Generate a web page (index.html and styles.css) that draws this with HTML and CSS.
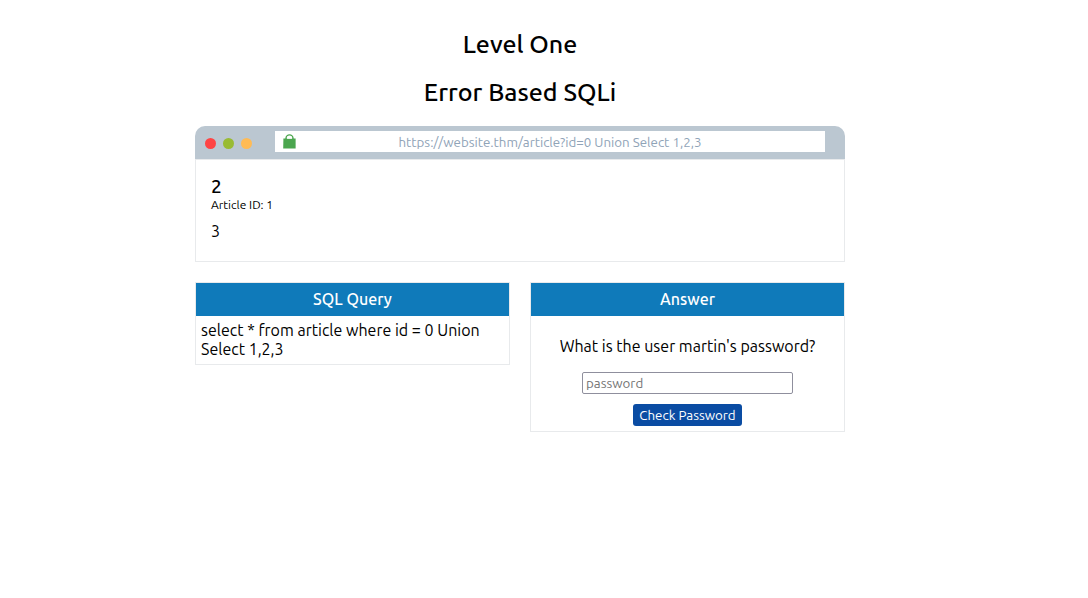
FILE: index.html
```html
<!DOCTYPE html>
<html lang="en">
<head>
    <meta charset="UTF-8">
    <meta name="viewport" content="width=device-width, initial-scale=1.0">
    <title>Level One - Error Based SQLi</title>
    <link rel="stylesheet" href="styles.css">
</head>
<body>
    <main class="container">
        <h1 class="title">Level One</h1>
        <h2 class="title">Error Based SQLi</h2>

        <div class="browser">
            <div class="browser-bar">
                <div class="dots">
                    <span class="dot red"></span>
                    <span class="dot green"></span>
                    <span class="dot orange"></span>
                </div>
                <div class="address">
                    <svg class="lock" viewBox="0 0 13 15" aria-hidden="true">
                        <path d="M3 6V4.4a3.5 3.5 0 0 1 7 0V6" fill="none" stroke="#4ba64f" stroke-width="1.4"/>
                        <path d="M0.4 4.6h12.2V14.4H0.2z" fill="#4ba64f"/>
                        <path d="M4 4.7a2.5 2.7 0 0 1 5 0z" fill="#fff"/>
                    </svg>
                    <input class="url" type="text" aria-label="Address" value="https://website.thm/article?id=0 Union Select 1,2,3">
                </div>
            </div>
            <div class="browser-page">
                <h3 class="article-title">2</h3>
                <div class="article-id">Article ID: 1</div>
                <p class="article-text">3</p>
            </div>
        </div>

        <div class="panels">
            <section class="panel">
                <h3 class="panel-title">SQL Query</h3>
                <div class="panel-body">select * from article where id = 0 Union Select 1,2,3</div>
            </section>
            <section class="panel">
                <h3 class="panel-title">Answer</h3>
                <form class="panel-body answer">
                    <label for="password">What is the user martin's password?</label>
                    <input class="password" id="password" type="text" placeholder="password">
                    <button class="check" type="button">Check Password</button>
                </form>
            </section>
        </div>
    </main>
</body>
</html>
```

FILE: styles.css
```css
* {
    box-sizing: border-box;
}
body {
    margin: 0;
    padding: 29px 48px 30px 0;
    background-color: #fff;
    color: #000;
    font-family: Ubuntu, "Noto Sans", sans-serif;
    font-size: 16px;
    line-height: 19px;
}
input, button {
    font-family: inherit;
}
.container {
    max-width: 650px;
    margin: 0 auto;
}
.title {
    margin: 0 0 18px;
    font-size: 25px;
    font-weight: 500;
    line-height: 30px;
    text-align: center;
}
.browser {
    margin-top: 19px;
}
.browser-bar {
    display: flex;
    align-items: center;
    gap: 23px;
    padding: 5px 20px 7px 10px;
    background-color: #bbc7d1;
    border-radius: 10px 10px 0 0;
}
.dots {
    display: flex;
    gap: 7px;
    padding-top: 3px;
}
.dot {
    width: 11px;
    height: 11px;
    border-radius: 50%;
}
.red {
    background-color: #ff4444;
}
.green {
    background-color: #99bb33;
}
.orange {
    background-color: #ffbb55;
}
.address {
    display: flex;
    flex: 1;
    align-items: center;
    padding: 0 8px;
    background-color: #fff;
}
.lock {
    width: 13px;
    height: 15px;
}
.url {
    flex: 1;
    min-width: 0;
    height: 21px;
    padding: 1px 13px 0 0;
    border: none;
    background: none;
    color: #8fa3b7;
    text-align: center;
}
.browser-page {
    padding: 16px 15px 20px;
    border: 1px solid #e8eaec;
}
.article-title {
    margin: 0;
    font-size: 19px;
    font-weight: 500;
    line-height: 21px;
}
.article-id {
    font-size: 12px;
    line-height: 15px;
}
.article-text {
    margin: 10px 0 0;
}
.panels {
    display: grid;
    grid-template-columns: 1fr 1fr;
    align-items: start;
    gap: 20px;
    margin-top: 20px;
}
.panel {
    border: 1px solid #e8eaec;
}
.panel-title {
    margin: 0;
    padding: 7px;
    background-color: #0f7aba;
    color: #fff;
    font-size: 16px;
    font-weight: 500;
    text-align: center;
}
.panel-body {
    padding: 5px;
}
.answer {
    display: flex;
    flex-direction: column;
    align-items: center;
}
.answer label {
    margin: 16px 0;
}
.password {
    width: 211px;
    height: 22px;
    padding: 1px 3px;
    border: 1px solid #8f8f9d;
    border-radius: 2px;
}
.password::placeholder {
    color: #757575;
}
.check {
    height: 22px;
    margin-top: 10px;
    padding: 0 6px;
    border: none;
    border-radius: 3px;
    background-color: #0a4ca3;
    color: #fff;
    cursor: pointer;
}
```
